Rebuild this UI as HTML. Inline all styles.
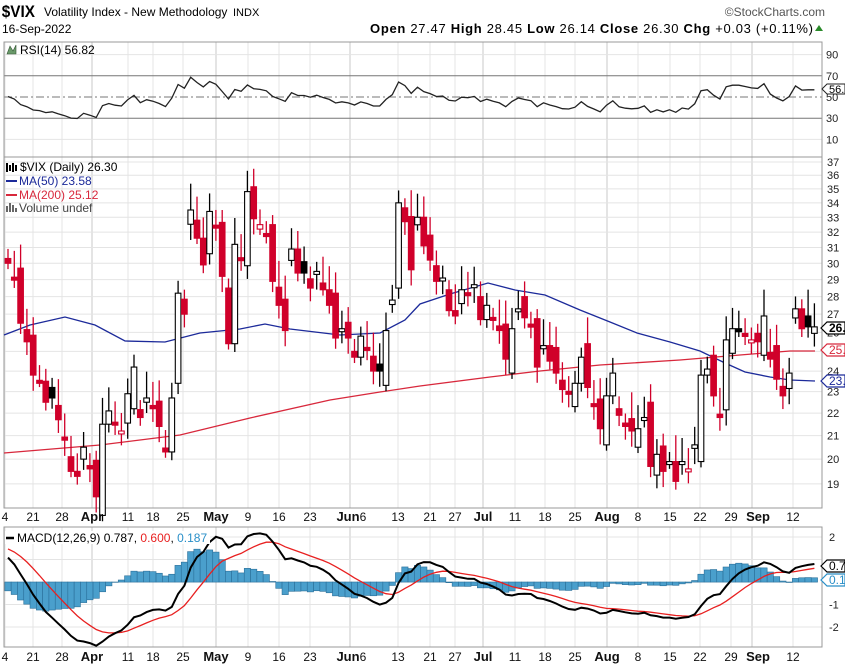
<!DOCTYPE html>
<html><head><meta charset="utf-8">
<style>
html,body{margin:0;padding:0;background:#fff;width:845px;height:668px;overflow:hidden}
svg{display:block;font-family:"Liberation Sans",sans-serif}
</style></head>
<body>
<svg id="s" width="845" height="668" viewBox="0 0 845 668" xmlns="http://www.w3.org/2000/svg">
<text x="2" y="17" font-size="17" font-weight="bold" fill="#000" transform="scale(0.9,1)">$VIX</text>
<text x="44" y="16" font-size="12" fill="#000">Volatility Index - New Methodology</text>
<text x="233" y="16" font-size="11" fill="#000">INDX</text>
<text x="825" y="16" font-size="12" fill="#555" text-anchor="end">©StockCharts.com</text>
<text x="2" y="33" font-size="12" fill="#000">16-Sep-2022</text>
<text x="813" y="33" font-size="13" fill="#000" text-anchor="end" textLength="443"><tspan font-weight="bold">Open</tspan> 27.47 <tspan font-weight="bold">High</tspan> 28.45 <tspan font-weight="bold">Low</tspan> 26.14 <tspan font-weight="bold">Close</tspan> 26.30 <tspan font-weight="bold">Chg</tspan> +0.03 (+0.11%)</text>
<polygon points="815,31 823,31 819,25" fill="#2a8a2a"/>
<g id="g"></g>
</svg>
<script>
var NS="http://www.w3.org/2000/svg",G=document.getElementById('g');
function el(t,a,txt){var e=document.createElementNS(NS,t);for(var k in a)e.setAttribute(k,a[k]);if(txt!=null)e.textContent=txt;G.appendChild(e);return e;}
var C=[30,29,26.5,25.5, 23.8,23.5,22.5,22.7,21.7, 20.8,19.5,19.3,20.5,19.6, 18.5,21.5,22.1,21.5,21.2, 22.9,24.2,21.8,22.7, 22.2,21.4,20.3,22.7,28.2, 27.0,33.5,31.6,29.9,33.4, 32.3,29.2,25.4,31.2,30.2, 34.8,32.9,32.5,31.8,28.9, 27.5,26.1,30.9,29.4,29.4, 28.5,29.5,28.4,27.5,25.7, 26.2,25.7,24.7,25.8, 25.1,24.0,24.0,26.1,27.8, 34.0,32.7,29.6,33.0,31.1, 30.2,28.9,29.1,27.2, 26.9,28.4,28.2,28.7,26.7, 27.5,26.7,26.1,24.6, 26.2,27.3,26.8,26.4,24.2, 25.3,24.5,23.9,23.1,23.0, 23.4,24.7,23.2,22.3,21.3, 22.8,23.9,21.9,21.4,21.2, 21.3,21.8,19.7,20.2,19.5, 19.9,19.1,19.9,19.6,20.6, 23.8,24.1,22.8,21.8,25.6, 26.2,26.2,25.9,25.6,25.5, 26.9,24.6,23.6,22.8, 23.9,27.3,26.2,26.3,26.3];
var PRE=[24,25,27,28,30,29,31,32,28,27,26,27,29,30,33,32,34,33,31,30,31,33,32,30,31,36,35,33,32,31];
var N=C.length,X0=8,DX=6.3;
function xi(i){return X0+i*DX}
var L37=Math.log(37);
function py(p){return 162+(L37-Math.log(p))*483}
var L=4,R=822;
function frame(t,b){el('rect',{x:L,y:t,width:R-L,height:b-t,fill:'none',stroke:'#999','stroke-width':1});}
var wk=[5,33,62,92,128,153,183,216,248,279,310,350,398,430,455,483,515,545,575,607,638,670,700,731,752,793];
var mon=[92,216,350,483,607,752];
function vgrid(t,b){wk.forEach(function(x){el('line',{x1:x,y1:t,x2:x,y2:b,stroke:mon.indexOf(x)>=0?'#c8c8c8':'#e4e4e4','stroke-width':1});});}
var rt=42,rb=157;function ry(v){return 97-(v-50)*1.06}
vgrid(rt,rb);
[90,10].forEach(function(v){el('line',{x1:L,y1:ry(v),x2:R,y2:ry(v),stroke:'#e4e4e4'});});
el('line',{x1:L,y1:ry(70),x2:R,y2:ry(70),stroke:'#777'});
el('line',{x1:L,y1:ry(30),x2:R,y2:ry(30),stroke:'#777'});
el('line',{x1:L,y1:ry(50),x2:R,y2:ry(50),stroke:'#777','stroke-dasharray':'8,3,2,3'});
frame(rt,rb);
[90,70,50,30,10].forEach(function(v){el('text',{x:826,y:ry(v)+4,'font-size':11,fill:'#222'},v);});
var A=PRE.concat(C),ag=0,al=0,rsi=[];
for(var i=1;i<A.length;i++){var d=A[i]-A[i-1],g=d>0?d:0,l=d<0?-d:0;if(i<=14){ag+=g/14;al+=l/14;}else{ag=(ag*13+g)/14;al=(al*13+l)/14;}rsi.push(100-100/(1+ag/(al||1e-9)));}
var rs=rsi.slice(rsi.length-N),pts=[];
for(i=0;i<N;i++)pts.push(xi(i)+','+ry(rs[i]).toFixed(1));
el('polyline',{points:pts.join(' '),fill:'none',stroke:'#222','stroke-width':1.3});
el('text',{x:20,y:54,'font-size':12,fill:'#000'},'RSI(14) 56.82');
el('path',{d:'M7 54 L10 46 L13 51 L16 45 L16 54 Z',fill:'#6a9a6a',stroke:'#335533','stroke-width':0.6});
el('path',{d:'M822 89 L827 84 L845 84 L845 94 L827 94 Z',fill:'#fff',stroke:'#222'});
el('text',{x:829,y:93,'font-size':11,fill:'#000'},'56.');
var mt=157,mb=508;
vgrid(mt,mb);
for(var p=19;p<=37;p++){el('line',{x1:L,y1:py(p),x2:R,y2:py(p),stroke:'#e4e4e4'});el('text',{x:827,y:py(p)+4,'font-size':11,fill:'#222'},p);}
frame(mt,mb);
function poly(arr,col){el('polyline',{points:arr.map(function(q){return q[0]+','+q[1]}).join(' '),fill:'none',stroke:col,'stroke-width':1.3});}
poly([[4,453],[100,445],[180,435],[250,418],[330,400],[380,392],[420,386],[490,377],[540,371],[600,365],[680,360],[740,355],[790,351],[815,351]],'#d8283c');
poly([[4,335],[30,325],[65,317],[95,325],[125,341],[165,342],[200,333],[240,329],[265,324],[290,329],[340,335],[380,333],[405,320],[420,304],[450,294],[488,283],[515,290],[545,295],[580,310],[610,322],[637,333],[670,342],[700,351],[725,363],[745,372],[770,377],[790,380],[815,381]],'#1c2a9a');
var prev=31;
for(i=0;i<N;i++){var c=C[i],o=prev+(((i*7)%5)-2)*0.35;if(i%4==1)o=c+(prev-c)*0.15;
 var hi=Math.max(o,c)*(1+0.02+((i*13)%7)*0.006),lo=Math.min(o,c)*(1-0.012-((i*11)%5)*0.005);
 var col=c<prev?'#d0002a':'#000',x=xi(i);
 el('line',{x1:x,y1:py(hi),x2:x,y2:py(lo),stroke:col,'stroke-width':1.3});
 var y1=py(Math.max(o,c)),y2=py(Math.min(o,c));if(y2-y1<3)y2=y1+3;
 el('rect',{x:x-2.8,y:y1,width:5.6,height:y2-y1,fill:c>o?'#fff':col,stroke:col,'stroke-width':1.1});
 prev=c;}
el('text',{x:20,y:171,'font-size':12,fill:'#000'},'$VIX (Daily) 26.30');
el('path',{d:'M7 163 v9 M10 165 v6 M13 163 v9 M16 165 v6',stroke:'#000','stroke-width':2});
el('line',{x1:6,y1:181,x2:17,y2:181,stroke:'#1c2a9a','stroke-width':2});
el('text',{x:19,y:185,'font-size':12,fill:'#1c2a9a'},'MA(50) 23.58');
el('line',{x1:6,y1:195,x2:17,y2:195,stroke:'#d8283c','stroke-width':2});
el('text',{x:19,y:199,'font-size':12,fill:'#d8283c'},'MA(200) 25.12');
el('path',{d:'M7 212 v-6 M10 212 v-9 M13 212 v-7 M16 212 v-4',stroke:'#666','stroke-width':2});
el('text',{x:19,y:212,'font-size':12,fill:'#444'},'Volume undef');
function tag(y,col,t,bold){el('path',{d:'M821 '+y+' L827 '+(y-6)+' L845 '+(y-6)+' L845 '+(y+6)+' L827 '+(y+6)+' Z',fill:'#fff',stroke:col,'stroke-width':1.2});el('text',{x:829,y:y+4,'font-size':12,fill:col,'font-weight':bold?'bold':'normal'},t);}
tag(328,'#000','26.',1);tag(350,'#d8283c','25.');tag(381,'#1c2a9a','23.');
var lab=[[5,'4'],[33,'21'],[62,'28'],[92,'Apr',1],[128,'11'],[153,'18'],[183,'25'],[216,'May',1],[248,'9'],[279,'16'],[310,'23'],[348,'Jun',1],[363,'6'],[398,'13'],[430,'21'],[455,'27'],[483,'Jul',1],[515,'11'],[545,'18'],[575,'25'],[607,'Aug',1],[638,'8'],[670,'15'],[700,'22'],[731,'29'],[758,'Sep',1],[793,'12']];
function xl(y){lab.forEach(function(a){el('text',{x:a[0],y:y,'font-size':a[2]?13:12,'font-weight':a[2]?'bold':'normal','text-anchor':'middle',fill:'#111'},a[1]);});}
xl(521);
var ct=527,cb=647;function cy(v){return 582-v*22.5}
vgrid(ct,cb);
[2,1,-1,-2].forEach(function(v){el('line',{x1:L,y1:cy(v),x2:R,y2:cy(v),stroke:'#e4e4e4'});});
function ema(a,n){var k=2/(n+1),r=[a[0]];for(var j=1;j<a.length;j++)r.push(a[j]*k+r[j-1]*(1-k));return r;}
var e12=ema(A,12),e26=ema(A,26),m=e12.map(function(v,j){return v-e26[j]}),sg=ema(m,9);
var mm=m.slice(m.length-N),ss=sg.slice(sg.length-N);
for(i=0;i<N;i++){var h=mm[i]-ss[i],y0=cy(0),yh=cy(h);el('rect',{x:xi(i)-3.15,y:Math.min(y0,yh),width:6.3,height:Math.abs(yh-y0)+0.1,fill:'#4a9fcc',stroke:'#2a6f99','stroke-width':0.6});}
frame(ct,cb);
var pm=[],ps=[];for(i=0;i<N;i++){pm.push(xi(i)+','+cy(mm[i]).toFixed(1));ps.push(xi(i)+','+cy(ss[i]).toFixed(1));}
el('polyline',{points:ps.join(' '),fill:'none',stroke:'#e82020','stroke-width':1.3});
el('polyline',{points:pm.join(' '),fill:'none',stroke:'#000','stroke-width':2});
el('rect',{x:5,y:531,width:205,height:13,fill:'#fff'});
el('line',{x1:6,y1:538,x2:14,y2:538,stroke:'#000','stroke-width':2.5});
var t=el('text',{x:17,y:542,'font-size':12,fill:'#000'});
t.innerHTML='MACD(12,26,9) 0.787, <tspan fill="#e82020">0.600</tspan>, <tspan fill="#2a8fc8">0.187</tspan>';
[[2,'2'],[-1,'-1'],[-2,'-2']].forEach(function(a){el('text',{x:829,y:cy(a[0])+4,'font-size':11,fill:'#222'},a[1]);});
tag(566,'#000','0.7');tag(580,'#2a8fc8','0.1');
xl(661);
</script>
</body></html>
